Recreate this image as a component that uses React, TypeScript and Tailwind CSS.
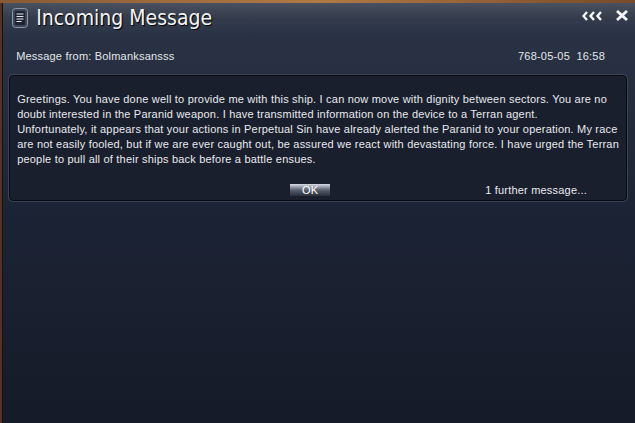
import React from "react";

function DocIcon() {
  return (
    <svg width="16" height="20" viewBox="0 0 16 20">
      <rect x="0.5" y="0.5" width="15" height="19" rx="3" fill="#3d4658" stroke="#8d97a8" />
      <rect x="3" y="3" width="10" height="14" rx="1" fill="#1d2330" />
      <line x1="4.5" y1="6" x2="11.5" y2="6" stroke="#e6ebf2" strokeWidth="1" />
      <line x1="4.5" y1="8.5" x2="11.5" y2="8.5" stroke="#e6ebf2" strokeWidth="1" />
      <line x1="4.5" y1="11" x2="11.5" y2="11" stroke="#e6ebf2" strokeWidth="1" />
      <line x1="4.5" y1="13.5" x2="9.5" y2="13.5" stroke="#e6ebf2" strokeWidth="1" />
    </svg>
  );
}

function Chevrons() {
  return (
    <svg width="21" height="10" viewBox="0 0 21 10">
      <g fill="none" stroke="#f4f6f8" strokeWidth="2.4" strokeLinejoin="miter">
        <polyline points="5,1 1.5,5 5,9" />
        <polyline points="12,1 8.5,5 12,9" />
        <polyline points="19,1 15.5,5 19,9" />
      </g>
    </svg>
  );
}

function CloseX() {
  return (
    <svg width="16" height="11" viewBox="0 0 16 11">
      <g stroke="#f4f6f8" strokeWidth="2.8">
        <line x1="3" y1="1" x2="13" y2="10" />
        <line x1="13" y1="1" x2="3" y2="10" />
      </g>
    </svg>
  );
}

export default function App() {
  const font = { fontFamily: '"Liberation Sans", Arial, sans-serif' };
  return (
    <div className="w-[635px] h-[423px] overflow-hidden bg-[#6b3a22] flex flex-col" style={font}>
      <div className="h-[3px] bg-gradient-to-r from-[#8a5a35] via-[#b07a45] to-[#7a4a2a]" />
      <div className="flex-1 flex">
        <div className="w-[3px] bg-[#5a3020]" />
        <div className="flex-1 flex flex-col bg-gradient-to-b from-[#2c3547] via-[#1c2334] to-[#151b28] border-l border-[#0e1219]">
          {/* Title bar */}
          <div className="h-[30px] flex items-center pl-[9px] pr-[5px] bg-gradient-to-b from-[#4a5262] via-[#343c4c] to-[#2b3446]">
            <DocIcon />
            <div
              className="ml-[8px] text-[21px] leading-none text-[#f2f4f7] [text-shadow:1px_1px_1px_#000]"
              style={{ fontFamily: '"DejaVu Sans Condensed", "DejaVu Sans", sans-serif', fontStretch: "condensed" }}
            >
              Incoming Message
            </div>
            <div className="ml-auto flex items-center gap-[11px] self-start mt-[7px]">
              <Chevrons />
              <CloseX />
            </div>
          </div>
          {/* From row */}
          <div className="flex items-center justify-between pl-[13px] pr-[30px] mt-[18px] text-[11px] text-[#e3e6ea] leading-none tracking-[0.2px]">
            <span>Message from: Bolmanksansss</span>
            <span>768-05-05&nbsp;&nbsp;16:58</span>
          </div>
          {/* Inner panel */}
          <div className="mt-[13px] ml-[6px] mr-[8px] h-[126px] rounded-[4px] border border-[#080a10] bg-[#1a1f2d] shadow-[0_0_0_1px_#3a4456] flex flex-col px-[7px]">
            <p className="mt-[16px] text-[11px] leading-[15px] text-[#e8eaee] tracking-[0.2px] whitespace-nowrap">
              Greetings. You have done well to provide me with this ship. I can now move with dignity between sectors. You are no
              <br />
              doubt interested in the Paranid weapon. I have transmitted information on the device to a Terran agent.
              <br />
              Unfortunately, it appears that your actions in Perpetual Sin have already alerted the Paranid to your operation. My race
              <br />
              are not easily fooled, but if we are ever caught out, be assured we react with devastating force. I have urged the Terran
              <br />
              people to pull all of their ships back before a battle ensues.
            </p>
            <div className="mt-auto mb-[4px] flex items-center text-[11px] text-[#e8eaee] leading-none tracking-[0.2px]">
              <div className="ml-[273px] w-[40px] h-[12px] flex items-center justify-center bg-gradient-to-b from-[#d8dde4] via-[#5a6070] to-[#2a2f3a] text-white text-[11px]">
                OK
              </div>
              <span className="ml-[155px]">1 further message...</span>
            </div>
          </div>
          <div className="flex-1" />
        </div>
      </div>
    </div>
  );
}
